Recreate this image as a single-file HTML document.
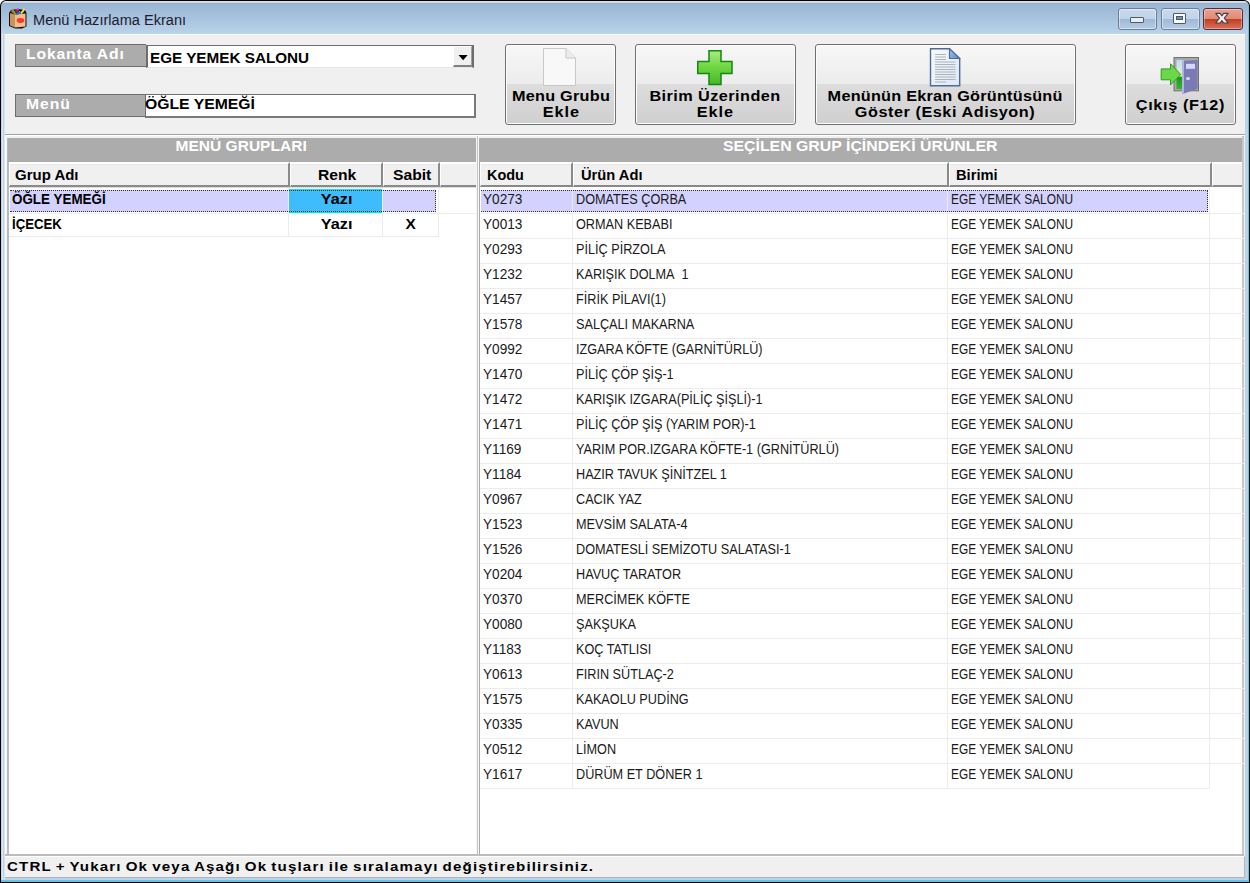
<!DOCTYPE html>
<html><head><meta charset="utf-8">
<style>
*{margin:0;padding:0;box-sizing:border-box}
html,body{width:1250px;height:883px;overflow:hidden;background:#fff}
body{position:relative;font-family:"Liberation Sans",sans-serif}
.a{position:absolute}
.t{position:absolute;white-space:nowrap;line-height:1;transform-origin:0 0}
</style></head><body>
<div class="a" style="left:0;top:0;width:1250px;height:883px;background:#000;border-radius:6px 6px 0 0"></div>
<div class="a" style="left:1px;top:1px;width:1248px;height:881px;border-radius:5px 5px 0 0;background:linear-gradient(#dde3ea 0,#dde3ea 1px,#c8d4e0 1px,#c8d4e0 2px,#98b4d1 2px,#b9d3ea 33px,#b9d3ea 100%)"></div>
<div class="a" style="left:1px;top:33px;width:1px;height:849px;background:#c9d3dd;"></div>
<div class="a" style="left:2px;top:33px;width:1px;height:849px;background:#dbe7f3;"></div>
<div class="a" style="left:4px;top:33px;width:1px;height:849px;background:#d6e2ee;"></div>
<div class="a" style="left:1248px;top:6px;width:1px;height:876px;background:#5bc8e6;"></div>
<div class="a" style="left:1px;top:880px;width:1248px;height:2px;background:#5bc8e6;"></div>
<div class="a" style="left:5px;top:34px;width:1240px;height:844px;background:#f0f0f0;"></div>
<div class="a" style="left:5px;top:34px;width:1240px;height:1px;background:#fbfbfb;"></div>
<div class="t" style="left:33px;top:12px;font-size:15.5px;transform:scaleX(0.94);color:#1e1a2e;">Menü Hazırlama Ekranı</div>
<div class="a" style="left:1118px;top:8px;width:39px;height:22px;border:1px solid #6c7e94;border-radius:3px;background:linear-gradient(#c9daed 0,#bfd2e8 50%,#9fb8d4 50%,#b4cbe4 100%);box-shadow:inset 0 0 0 1px rgba(255,255,255,.45)"></div>
<div class="a" style="left:1130px;top:17px;width:14px;height:6px;background:#ececec;border:1px solid #4a5a6e;border-radius:1px"></div>
<div class="a" style="left:1161px;top:8px;width:39px;height:22px;border:1px solid #6c7e94;border-radius:3px;background:linear-gradient(#c9daed 0,#bfd2e8 50%,#9fb8d4 50%,#b4cbe4 100%);box-shadow:inset 0 0 0 1px rgba(255,255,255,.45)"></div>
<div class="a" style="left:1173px;top:13px;width:13px;height:11px;background:#fafafa;border:1px solid #4a5a6e;border-radius:1px"></div>
<div class="a" style="left:1176px;top:16px;width:7px;height:4px;background:#7b8fa8;border:1px solid #4a5a6e"></div>
<div class="a" style="left:1203px;top:8px;width:40px;height:22px;border:1px solid #5a2a38;border-radius:3px;background:linear-gradient(#e8a493 0,#dd8a75 50%,#c23b1e 50%,#d6735c 100%);box-shadow:inset 0 0 0 1px rgba(255,255,255,.35)"></div>
<svg class="a" style="left:1212px;top:10px" width="20" height="16" viewBox="0 0 20 16"><path d="M3.7 3.4H8.1L9.9 5.8L11.7 3.4H16.1L12.3 8.2L16.1 13H11.7L9.9 10.6L8.1 13H3.7L7.5 8.2Z" fill="#f0f0f0" stroke="#4e3c44" stroke-width="1.1" stroke-linejoin="round"/></svg>
<div class="a" style="left:15px;top:44px;width:131px;height:23px;background:#acacac;border:1px solid #6e6e6e;border-right:none"></div>
<div class="t" style="left:26px;top:47px;font-size:14px;font-weight:bold;transform:scaleX(1.12);letter-spacing:0.77px;color:#fff;">Lokanta Adı</div>
<div class="a" style="left:146px;top:45px;width:328px;height:23px;background:#fff;border-top:1px solid #6d6d6d;border-left:2px solid #6d6d6d;border-right:2px solid #6d6d6d;border-bottom:1px solid #e6e6e6"></div>
<div class="a" style="left:453px;top:46px;width:19px;height:21px;background:#f0f0f0;border-top:1px solid #fff;border-left:1px solid #fff;border-bottom:2px solid #808080;border-right:1px solid #a0a0a0"></div>
<svg class="a" style="left:458px;top:55px" width="10" height="6" viewBox="0 0 10 6"><path d="M0.5 0H9.7L5.1 5.2Z" fill="#000"/></svg>
<div class="t" style="left:150px;top:51px;font-size:14px;font-weight:bold;transform:scaleX(1.09);color:#000;">EGE YEMEK SALONU</div>
<div class="a" style="left:15px;top:94px;width:130px;height:23px;background:#acacac;border:1px solid #6e6e6e;border-right:none"></div>
<div class="t" style="left:26px;top:97px;font-size:14px;font-weight:bold;transform:scaleX(1.12);letter-spacing:0.83px;color:#fff;">Menü</div>
<div class="a" style="left:145px;top:94px;width:331px;height:24px;background:#fff;border-top:1px solid #6e6e6e;border-left:1px solid #6e6e6e;border-right:2px solid #7a7a7a;border-bottom:2px solid #7a7a7a"></div>
<div class="t" style="left:145px;top:97px;font-size:14px;font-weight:bold;transform:scaleX(1.125);color:#000;">ÖĞLE YEMEĞİ</div>
<div class="a" style="left:505px;top:44px;width:111px;height:81px;border:1px solid #707070;border-radius:3px;background:linear-gradient(#f7f7f7 0,#ececec 39px,#dddddd 39px,#cfcfcf 100%);box-shadow:inset 0 0 0 1px #fcfcfc"></div>
<div class="a" style="left:635px;top:44px;width:161px;height:81px;border:1px solid #707070;border-radius:3px;background:linear-gradient(#f7f7f7 0,#ececec 39px,#dddddd 39px,#cfcfcf 100%);box-shadow:inset 0 0 0 1px #fcfcfc"></div>
<div class="a" style="left:815px;top:44px;width:261px;height:81px;border:1px solid #707070;border-radius:3px;background:linear-gradient(#f7f7f7 0,#ececec 39px,#dddddd 39px,#cfcfcf 100%);box-shadow:inset 0 0 0 1px #fcfcfc"></div>
<div class="a" style="left:1125px;top:44px;width:111px;height:81px;border:1px solid #707070;border-radius:3px;background:linear-gradient(#f7f7f7 0,#ececec 39px,#dddddd 39px,#cfcfcf 100%);box-shadow:inset 0 0 0 1px #fcfcfc"></div>
<div class="t" style="left:261px;width:600px;text-align:center;top:89px;font-size:14.5px;font-weight:bold;color:#000"><span style="display:inline-block;transform:scaleX(1.12);letter-spacing:0.22px;padding-left:0.22px;">Menu Grubu</span></div>
<div class="t" style="left:261px;width:600px;text-align:center;top:105px;font-size:14.5px;font-weight:bold;color:#000"><span style="display:inline-block;transform:scaleX(1.12);letter-spacing:0.8px;padding-left:0.8px;">Ekle</span></div>
<div class="t" style="left:415px;width:600px;text-align:center;top:89px;font-size:14.5px;font-weight:bold;color:#000"><span style="display:inline-block;transform:scaleX(1.12);letter-spacing:0.4px;padding-left:0.4px;">Birim Üzerinden</span></div>
<div class="t" style="left:415px;width:600px;text-align:center;top:105px;font-size:14.5px;font-weight:bold;color:#000"><span style="display:inline-block;transform:scaleX(1.12);letter-spacing:0.8px;padding-left:0.8px;">Ekle</span></div>
<div class="t" style="left:645px;width:600px;text-align:center;top:89px;font-size:14.5px;font-weight:bold;color:#000"><span style="display:inline-block;transform:scaleX(1.12);letter-spacing:0.21px;padding-left:0.21px;">Menünün Ekran Görüntüsünü</span></div>
<div class="t" style="left:645px;width:600px;text-align:center;top:105px;font-size:14.5px;font-weight:bold;color:#000"><span style="display:inline-block;transform:scaleX(1.12);letter-spacing:0.48px;padding-left:0.48px;">Göster (Eski Adisyon)</span></div>
<div class="t" style="left:880px;width:600px;text-align:center;top:98px;font-size:14.5px;font-weight:bold;color:#000"><span style="display:inline-block;transform:scaleX(1.12);letter-spacing:0.57px;padding-left:0.57px;">Çıkış (F12)</span></div>
<svg class="a" style="left:542px;top:47px" width="36" height="40" viewBox="0 0 36 40"><path d="M1.5 1.5H24L33.5 11V38.5H1.5Z" fill="#f8f8f8" stroke="#c8c8c8"/><path d="M24 1.5V11H33.5" fill="#ececec" stroke="#c8c8c8"/></svg>
<svg class="a" style="left:697px;top:50px" width="36" height="36" viewBox="0 0 36 36"><defs><linearGradient id="pl" x1="0" y1="0" x2="0" y2="1"><stop offset="0" stop-color="#a8ec80"/><stop offset=".5" stop-color="#6cd640"/><stop offset="1" stop-color="#48b82a"/></linearGradient></defs><path d="M12 0.75H24V11.5H35V23.5H24V34.5H12V23.5H0.75V11.5H12Z" fill="url(#pl)" stroke="#15870f" stroke-width="1.5"/></svg>
<svg class="a" style="left:929px;top:47px" width="32" height="40" viewBox="0 0 32 40"><defs><linearGradient id="dg" x1="0" y1="0" x2="1" y2="1"><stop offset="0" stop-color="#f6fafe"/><stop offset="1" stop-color="#dce8f6"/></linearGradient><linearGradient id="fg" x1="0" y1="0" x2="1" y2="1"><stop offset="0" stop-color="#a8d0f4"/><stop offset="1" stop-color="#4a88c8"/></linearGradient></defs><path d="M1.5 1.8H20.5L30.7 11.5V38.7H1.5Z" fill="url(#dg)" stroke="#51699a" stroke-width="1.4"/><path d="M20.5 1.8V11.5H30.7Z" fill="url(#fg)" stroke="#51699a" stroke-width="1.2"/><g stroke="#a8aab0" stroke-width="0.9"><path d="M6 7.5H17M6 10H17M6 12.5H17M6 15H26.5M6 17.5H26.5M6 20H26.5M6 22.5H26.5M6 25H26.5M6 27.5H26.5M6 30H26.5M6 32.5H26.5M6 35H17"/></g></svg>
<svg class="a" style="left:1155px;top:55px" width="46" height="42" viewBox="0 0 46 42"><defs><linearGradient id="op" x1="0" y1="0" x2="0" y2="1"><stop offset="0" stop-color="#b8dcf8"/><stop offset=".55" stop-color="#eef2c8"/><stop offset=".6" stop-color="#1a9a1a"/><stop offset="1" stop-color="#2eb82e"/></linearGradient></defs><rect x="19" y="2.5" width="24.5" height="33.3" fill="#a8a8a8" stroke="#707070"/><rect x="21.5" y="5" width="7" height="29" fill="url(#op)"/><path d="M27 6 L42.5 5 V33.7 L27 39.3Z" fill="#7a7ab6"/><path d="M27 6 L29 5.9 V38.5 L27 39.3Z" fill="#b4b4e4"/><rect x="31" y="8.8" width="9" height="5" fill="#d8d8fc"/><ellipse cx="33" cy="23.5" rx="2" ry="1.6" fill="#e0e0e0"/><path d="M6.2 13.9H15.5V8.8L25.8 19.5L15.5 29.9V24.8H6.2Z" fill="#6ad848" stroke="#2a9a20"/></svg>
<div class="a" style="left:5px;top:134px;width:1240px;height:1px;background:#a0a0a0;"></div>
<div class="a" style="left:5px;top:135px;width:1240px;height:1px;background:#ffffff;"></div>
<div class="a" style="left:5px;top:136px;width:472px;height:720px;background:#f0f0f0;"></div>
<div class="a" style="left:5px;top:136px;width:1px;height:720px;background:#ffffff;"></div>
<div class="a" style="left:7px;top:138px;width:2px;height:716px;background:#bcbcbc;"></div>
<div class="a" style="left:8px;top:138px;width:469px;height:24px;background:#acacac;"></div>
<div class="t" style="left:-59px;width:600px;text-align:center;top:139px;font-size:14px;font-weight:bold;color:#fff"><span style="display:inline-block;transform:scaleX(1.11);">MENÜ GRUPLARI</span></div>
<div class="a" style="left:9px;top:162px;width:467px;height:692px;background:#ffffff;"></div>
<div class="a" style="left:9px;top:162px;width:281px;height:25px;background:#f0f0f0;border-top:2px solid #fff;border-left:1px solid #fff;border-right:2px solid #8a8a8a;border-bottom:2px solid #8a8a8a;box-shadow:inset 0 1px 0 #e8e8e8"></div>
<div class="a" style="left:290px;top:162px;width:93px;height:25px;background:#f0f0f0;border-top:2px solid #fff;border-left:1px solid #fff;border-right:2px solid #8a8a8a;border-bottom:2px solid #8a8a8a;box-shadow:inset 0 1px 0 #e8e8e8"></div>
<div class="a" style="left:383px;top:162px;width:57px;height:25px;background:#f0f0f0;border-top:2px solid #fff;border-left:1px solid #fff;border-right:2px solid #8a8a8a;border-bottom:2px solid #8a8a8a;box-shadow:inset 0 1px 0 #e8e8e8"></div>
<div class="a" style="left:440px;top:162px;width:36px;height:25px;background:#f0f0f0;border-top:2px solid #fff;border-left:1px solid #fff;border-bottom:2px solid #8a8a8a"></div>
<div class="t" style="left:15px;top:168px;font-size:14px;font-weight:bold;transform:scaleX(1.07);color:#000;">Grup Adı</div>
<div class="t" style="left:318px;top:168px;font-size:14px;font-weight:bold;transform:scaleX(1.12);color:#000;">Renk</div>
<div class="t" style="left:393px;top:168px;font-size:14px;font-weight:bold;transform:scaleX(1.12);color:#000;">Sabit</div>
<div class="a" style="left:9px;top:187px;width:467px;height:1px;background:#dcdcdc;"></div>
<div class="a" style="left:480px;top:187px;width:762px;height:1px;background:#dcdcdc;"></div>
<div class="a" style="left:10px;top:190px;width:426px;height:22px;background:#d3d2fe;"></div>
<div class="a" style="left:9px;top:213px;width:467px;height:1px;background:#ececec;"></div>
<div class="a" style="left:9px;top:236px;width:430px;height:1px;background:#ececec;"></div>
<div class="a" style="left:288px;top:188px;width:1px;height:49px;background:#ececec;"></div>
<div class="a" style="left:382px;top:188px;width:1px;height:49px;background:#ececec;"></div>
<div class="a" style="left:438px;top:188px;width:1px;height:49px;background:#ececec;"></div>
<div class="a" style="left:289px;top:189px;width:93px;height:24px;background:#3ebcfc;border-top:1px solid #00e8f0;border-bottom:1px solid #00e8f0"></div>
<div class="a" style="left:10px;top:190px;width:426px;height:22px;background:transparent;border:1px dotted #333;border-left:none"></div>
<div class="t" style="left:12px;top:192px;font-size:14px;font-weight:bold;transform:scaleX(0.958);color:#000;">ÖĞLE YEMEĞİ</div>
<div class="t" style="left:12px;top:217px;font-size:14px;font-weight:bold;transform:scaleX(0.941);color:#000;">İÇECEK</div>
<div class="t" style="left:37px;width:600px;text-align:center;top:192px;font-size:14px;font-weight:bold;color:#000"><span style="display:inline-block;transform:scaleX(1.16);">Yazı</span></div>
<div class="t" style="left:37px;width:600px;text-align:center;top:217px;font-size:14px;font-weight:bold;color:#000"><span style="display:inline-block;transform:scaleX(1.16);">Yazı</span></div>
<div class="t" style="left:111px;width:600px;text-align:center;top:217px;font-size:14px;font-weight:bold;color:#000"><span style="display:inline-block;transform:scaleX(1.1);">X</span></div>
<div class="a" style="left:476px;top:136px;width:1px;height:720px;background:#f6f6f6;"></div>
<div class="a" style="left:477px;top:136px;width:1px;height:720px;background:#c4c4c4;"></div>
<div class="a" style="left:478px;top:136px;width:1px;height:720px;background:#fafafa;"></div>
<div class="a" style="left:479px;top:162px;width:1px;height:692px;background:#a8a8a8;"></div>
<div class="a" style="left:479px;top:138px;width:763px;height:24px;background:#acacac;"></div>
<div class="t" style="left:560px;width:600px;text-align:center;top:139px;font-size:14px;font-weight:bold;color:#fff"><span style="display:inline-block;transform:scaleX(1.133);">SEÇİLEN GRUP İÇİNDEKİ ÜRÜNLER</span></div>
<div class="a" style="left:480px;top:162px;width:762px;height:692px;background:#ffffff;"></div>
<div class="a" style="left:1242px;top:136px;width:2px;height:720px;background:#c8c8c8;"></div>
<div class="a" style="left:480px;top:162px;width:93px;height:25px;background:#f0f0f0;border-top:2px solid #fff;border-left:1px solid #fff;border-right:2px solid #8a8a8a;border-bottom:2px solid #8a8a8a;box-shadow:inset 0 1px 0 #e8e8e8"></div>
<div class="a" style="left:573px;top:162px;width:376px;height:25px;background:#f0f0f0;border-top:2px solid #fff;border-left:1px solid #fff;border-right:2px solid #8a8a8a;border-bottom:2px solid #8a8a8a;box-shadow:inset 0 1px 0 #e8e8e8"></div>
<div class="a" style="left:949px;top:162px;width:263px;height:25px;background:#f0f0f0;border-top:2px solid #fff;border-left:1px solid #fff;border-right:2px solid #8a8a8a;border-bottom:2px solid #8a8a8a;box-shadow:inset 0 1px 0 #e8e8e8"></div>
<div class="a" style="left:1212px;top:162px;width:30px;height:25px;background:#f0f0f0;border-top:2px solid #fff;border-left:1px solid #fff;border-bottom:2px solid #8a8a8a"></div>
<div class="t" style="left:487px;top:168px;font-size:14px;font-weight:bold;transform:scaleX(1.03);color:#000;">Kodu</div>
<div class="t" style="left:581px;top:168px;font-size:14px;font-weight:bold;transform:scaleX(1.05);color:#000;">Ürün Adı</div>
<div class="t" style="left:956px;top:168px;font-size:14px;font-weight:bold;transform:scaleX(1.05);color:#000;">Birimi</div>
<div class="a" style="left:481px;top:190px;width:727px;height:22px;background:#d3d2fe;border:1px dotted #333;border-left:none"></div>
<div class="t" style="left:483px;top:192px;font-size:14px;transform:scaleX(0.974);color:#1a1a1a;">Y0273</div>
<div class="t" style="left:576px;top:192px;font-size:14px;transform:scaleX(0.905);color:#1a1a1a;">DOMATES ÇORBA</div>
<div class="t" style="left:951px;top:192px;font-size:14px;transform:scaleX(0.85);color:#1a1a1a;">EGE YEMEK SALONU</div>
<div class="a" style="left:480px;top:213px;width:764px;height:1px;background:#ececec;"></div>
<div class="t" style="left:483px;top:217px;font-size:14px;transform:scaleX(0.974);color:#1a1a1a;">Y0013</div>
<div class="t" style="left:576px;top:217px;font-size:14px;transform:scaleX(0.905);color:#1a1a1a;">ORMAN KEBABI</div>
<div class="t" style="left:951px;top:217px;font-size:14px;transform:scaleX(0.85);color:#1a1a1a;">EGE YEMEK SALONU</div>
<div class="a" style="left:480px;top:238px;width:764px;height:1px;background:#ececec;"></div>
<div class="t" style="left:483px;top:242px;font-size:14px;transform:scaleX(0.974);color:#1a1a1a;">Y0293</div>
<div class="t" style="left:576px;top:242px;font-size:14px;transform:scaleX(0.905);color:#1a1a1a;">PİLİÇ PİRZOLA</div>
<div class="t" style="left:951px;top:242px;font-size:14px;transform:scaleX(0.85);color:#1a1a1a;">EGE YEMEK SALONU</div>
<div class="a" style="left:480px;top:263px;width:764px;height:1px;background:#ececec;"></div>
<div class="t" style="left:483px;top:267px;font-size:14px;transform:scaleX(0.974);color:#1a1a1a;">Y1232</div>
<div class="t" style="left:576px;top:267px;font-size:14px;transform:scaleX(0.905);color:#1a1a1a;">KARIŞIK DOLMA&nbsp; 1</div>
<div class="t" style="left:951px;top:267px;font-size:14px;transform:scaleX(0.85);color:#1a1a1a;">EGE YEMEK SALONU</div>
<div class="a" style="left:480px;top:288px;width:764px;height:1px;background:#ececec;"></div>
<div class="t" style="left:483px;top:292px;font-size:14px;transform:scaleX(0.974);color:#1a1a1a;">Y1457</div>
<div class="t" style="left:576px;top:292px;font-size:14px;transform:scaleX(0.905);color:#1a1a1a;">FİRİK PİLAVI(1)</div>
<div class="t" style="left:951px;top:292px;font-size:14px;transform:scaleX(0.85);color:#1a1a1a;">EGE YEMEK SALONU</div>
<div class="a" style="left:480px;top:313px;width:764px;height:1px;background:#ececec;"></div>
<div class="t" style="left:483px;top:317px;font-size:14px;transform:scaleX(0.974);color:#1a1a1a;">Y1578</div>
<div class="t" style="left:576px;top:317px;font-size:14px;transform:scaleX(0.905);color:#1a1a1a;">SALÇALI MAKARNA</div>
<div class="t" style="left:951px;top:317px;font-size:14px;transform:scaleX(0.85);color:#1a1a1a;">EGE YEMEK SALONU</div>
<div class="a" style="left:480px;top:338px;width:764px;height:1px;background:#ececec;"></div>
<div class="t" style="left:483px;top:342px;font-size:14px;transform:scaleX(0.974);color:#1a1a1a;">Y0992</div>
<div class="t" style="left:576px;top:342px;font-size:14px;transform:scaleX(0.905);color:#1a1a1a;">IZGARA KÖFTE (GARNİTÜRLÜ)</div>
<div class="t" style="left:951px;top:342px;font-size:14px;transform:scaleX(0.85);color:#1a1a1a;">EGE YEMEK SALONU</div>
<div class="a" style="left:480px;top:363px;width:764px;height:1px;background:#ececec;"></div>
<div class="t" style="left:483px;top:367px;font-size:14px;transform:scaleX(0.974);color:#1a1a1a;">Y1470</div>
<div class="t" style="left:576px;top:367px;font-size:14px;transform:scaleX(0.905);color:#1a1a1a;">PİLİÇ ÇÖP ŞİŞ-1</div>
<div class="t" style="left:951px;top:367px;font-size:14px;transform:scaleX(0.85);color:#1a1a1a;">EGE YEMEK SALONU</div>
<div class="a" style="left:480px;top:388px;width:764px;height:1px;background:#ececec;"></div>
<div class="t" style="left:483px;top:392px;font-size:14px;transform:scaleX(0.974);color:#1a1a1a;">Y1472</div>
<div class="t" style="left:576px;top:392px;font-size:14px;transform:scaleX(0.905);color:#1a1a1a;">KARIŞIK IZGARA(PİLİÇ ŞİŞLİ)-1</div>
<div class="t" style="left:951px;top:392px;font-size:14px;transform:scaleX(0.85);color:#1a1a1a;">EGE YEMEK SALONU</div>
<div class="a" style="left:480px;top:413px;width:764px;height:1px;background:#ececec;"></div>
<div class="t" style="left:483px;top:417px;font-size:14px;transform:scaleX(0.974);color:#1a1a1a;">Y1471</div>
<div class="t" style="left:576px;top:417px;font-size:14px;transform:scaleX(0.905);color:#1a1a1a;">PİLİÇ ÇÖP ŞİŞ (YARIM POR)-1</div>
<div class="t" style="left:951px;top:417px;font-size:14px;transform:scaleX(0.85);color:#1a1a1a;">EGE YEMEK SALONU</div>
<div class="a" style="left:480px;top:438px;width:764px;height:1px;background:#ececec;"></div>
<div class="t" style="left:483px;top:442px;font-size:14px;transform:scaleX(0.974);color:#1a1a1a;">Y1169</div>
<div class="t" style="left:576px;top:442px;font-size:14px;transform:scaleX(0.905);color:#1a1a1a;">YARIM POR.IZGARA KÖFTE-1 (GRNİTÜRLÜ)</div>
<div class="t" style="left:951px;top:442px;font-size:14px;transform:scaleX(0.85);color:#1a1a1a;">EGE YEMEK SALONU</div>
<div class="a" style="left:480px;top:463px;width:764px;height:1px;background:#ececec;"></div>
<div class="t" style="left:483px;top:467px;font-size:14px;transform:scaleX(0.974);color:#1a1a1a;">Y1184</div>
<div class="t" style="left:576px;top:467px;font-size:14px;transform:scaleX(0.905);color:#1a1a1a;">HAZIR TAVUK ŞİNİTZEL 1</div>
<div class="t" style="left:951px;top:467px;font-size:14px;transform:scaleX(0.85);color:#1a1a1a;">EGE YEMEK SALONU</div>
<div class="a" style="left:480px;top:488px;width:764px;height:1px;background:#ececec;"></div>
<div class="t" style="left:483px;top:492px;font-size:14px;transform:scaleX(0.974);color:#1a1a1a;">Y0967</div>
<div class="t" style="left:576px;top:492px;font-size:14px;transform:scaleX(0.905);color:#1a1a1a;">CACIK YAZ</div>
<div class="t" style="left:951px;top:492px;font-size:14px;transform:scaleX(0.85);color:#1a1a1a;">EGE YEMEK SALONU</div>
<div class="a" style="left:480px;top:513px;width:764px;height:1px;background:#ececec;"></div>
<div class="t" style="left:483px;top:517px;font-size:14px;transform:scaleX(0.974);color:#1a1a1a;">Y1523</div>
<div class="t" style="left:576px;top:517px;font-size:14px;transform:scaleX(0.905);color:#1a1a1a;">MEVSİM SALATA-4</div>
<div class="t" style="left:951px;top:517px;font-size:14px;transform:scaleX(0.85);color:#1a1a1a;">EGE YEMEK SALONU</div>
<div class="a" style="left:480px;top:538px;width:764px;height:1px;background:#ececec;"></div>
<div class="t" style="left:483px;top:542px;font-size:14px;transform:scaleX(0.974);color:#1a1a1a;">Y1526</div>
<div class="t" style="left:576px;top:542px;font-size:14px;transform:scaleX(0.905);color:#1a1a1a;">DOMATESLİ SEMİZOTU SALATASI-1</div>
<div class="t" style="left:951px;top:542px;font-size:14px;transform:scaleX(0.85);color:#1a1a1a;">EGE YEMEK SALONU</div>
<div class="a" style="left:480px;top:563px;width:764px;height:1px;background:#ececec;"></div>
<div class="t" style="left:483px;top:567px;font-size:14px;transform:scaleX(0.974);color:#1a1a1a;">Y0204</div>
<div class="t" style="left:576px;top:567px;font-size:14px;transform:scaleX(0.905);color:#1a1a1a;">HAVUÇ TARATOR</div>
<div class="t" style="left:951px;top:567px;font-size:14px;transform:scaleX(0.85);color:#1a1a1a;">EGE YEMEK SALONU</div>
<div class="a" style="left:480px;top:588px;width:764px;height:1px;background:#ececec;"></div>
<div class="t" style="left:483px;top:592px;font-size:14px;transform:scaleX(0.974);color:#1a1a1a;">Y0370</div>
<div class="t" style="left:576px;top:592px;font-size:14px;transform:scaleX(0.905);color:#1a1a1a;">MERCİMEK KÖFTE</div>
<div class="t" style="left:951px;top:592px;font-size:14px;transform:scaleX(0.85);color:#1a1a1a;">EGE YEMEK SALONU</div>
<div class="a" style="left:480px;top:613px;width:764px;height:1px;background:#ececec;"></div>
<div class="t" style="left:483px;top:617px;font-size:14px;transform:scaleX(0.974);color:#1a1a1a;">Y0080</div>
<div class="t" style="left:576px;top:617px;font-size:14px;transform:scaleX(0.905);color:#1a1a1a;">ŞAKŞUKA</div>
<div class="t" style="left:951px;top:617px;font-size:14px;transform:scaleX(0.85);color:#1a1a1a;">EGE YEMEK SALONU</div>
<div class="a" style="left:480px;top:638px;width:764px;height:1px;background:#ececec;"></div>
<div class="t" style="left:483px;top:642px;font-size:14px;transform:scaleX(0.974);color:#1a1a1a;">Y1183</div>
<div class="t" style="left:576px;top:642px;font-size:14px;transform:scaleX(0.905);color:#1a1a1a;">KOÇ TATLISI</div>
<div class="t" style="left:951px;top:642px;font-size:14px;transform:scaleX(0.85);color:#1a1a1a;">EGE YEMEK SALONU</div>
<div class="a" style="left:480px;top:663px;width:764px;height:1px;background:#ececec;"></div>
<div class="t" style="left:483px;top:667px;font-size:14px;transform:scaleX(0.974);color:#1a1a1a;">Y0613</div>
<div class="t" style="left:576px;top:667px;font-size:14px;transform:scaleX(0.905);color:#1a1a1a;">FIRIN SÜTLAÇ-2</div>
<div class="t" style="left:951px;top:667px;font-size:14px;transform:scaleX(0.85);color:#1a1a1a;">EGE YEMEK SALONU</div>
<div class="a" style="left:480px;top:688px;width:764px;height:1px;background:#ececec;"></div>
<div class="t" style="left:483px;top:692px;font-size:14px;transform:scaleX(0.974);color:#1a1a1a;">Y1575</div>
<div class="t" style="left:576px;top:692px;font-size:14px;transform:scaleX(0.905);color:#1a1a1a;">KAKAOLU PUDİNG</div>
<div class="t" style="left:951px;top:692px;font-size:14px;transform:scaleX(0.85);color:#1a1a1a;">EGE YEMEK SALONU</div>
<div class="a" style="left:480px;top:713px;width:764px;height:1px;background:#ececec;"></div>
<div class="t" style="left:483px;top:717px;font-size:14px;transform:scaleX(0.974);color:#1a1a1a;">Y0335</div>
<div class="t" style="left:576px;top:717px;font-size:14px;transform:scaleX(0.905);color:#1a1a1a;">KAVUN</div>
<div class="t" style="left:951px;top:717px;font-size:14px;transform:scaleX(0.85);color:#1a1a1a;">EGE YEMEK SALONU</div>
<div class="a" style="left:480px;top:738px;width:764px;height:1px;background:#ececec;"></div>
<div class="t" style="left:483px;top:742px;font-size:14px;transform:scaleX(0.974);color:#1a1a1a;">Y0512</div>
<div class="t" style="left:576px;top:742px;font-size:14px;transform:scaleX(0.905);color:#1a1a1a;">LİMON</div>
<div class="t" style="left:951px;top:742px;font-size:14px;transform:scaleX(0.85);color:#1a1a1a;">EGE YEMEK SALONU</div>
<div class="a" style="left:480px;top:763px;width:764px;height:1px;background:#ececec;"></div>
<div class="t" style="left:483px;top:767px;font-size:14px;transform:scaleX(0.974);color:#1a1a1a;">Y1617</div>
<div class="t" style="left:576px;top:767px;font-size:14px;transform:scaleX(0.905);color:#1a1a1a;">DÜRÜM ET DÖNER 1</div>
<div class="t" style="left:951px;top:767px;font-size:14px;transform:scaleX(0.85);color:#1a1a1a;">EGE YEMEK SALONU</div>
<div class="a" style="left:480px;top:788px;width:730px;height:1px;background:#ececec;"></div>
<div class="a" style="left:572px;top:188px;width:1px;height:600px;background:#ececec;"></div>
<div class="a" style="left:947px;top:188px;width:1px;height:600px;background:#ececec;"></div>
<div class="a" style="left:1209px;top:188px;width:1px;height:600px;background:#ececec;"></div>
<div class="a" style="left:481px;top:190px;width:727px;height:22px;background:transparent;border:1px dotted #333;border-left:none"></div>
<div class="a" style="left:5px;top:854px;width:1239px;height:2px;background:#bcbcbc;"></div>
<div class="a" style="left:5px;top:856px;width:1240px;height:21px;background:#f0f0f0;border-top:1px solid #fff;border-right:1px solid #b4b4b4"></div>
<div class="a" style="left:5px;top:877px;width:1240px;height:1px;background:#b4b4b4;"></div>
<div class="t" style="left:7px;top:860px;font-size:13.5px;font-weight:bold;transform:scaleX(1.12);letter-spacing:1.03px;word-spacing:-1.2px;color:#000;">CTRL + Yukarı Ok veya Aşağı Ok tuşları ile sıralamayı değiştirebilirsiniz.</div>
<svg class="a" style="left:6px;top:6px" width="24" height="24" viewBox="0 0 24 24">
<path d="M3 7 L5 4 L12 3 L19 4 L20.5 7 V20.5 L16 22.5 L9 22.5 L3 20 Z" fill="#111"/>
<path d="M4 7 L9 8.5 V21.5 L4 19.5 Z" fill="#c8935c"/>
<path d="M9 8.5 L19.5 7.5 V20.5 L9 21.5 Z" fill="#f0c08a"/>
<ellipse cx="14.5" cy="14.5" rx="3.8" ry="2.4" fill="#ff3535"/>
<path d="M5 4.5 L9.5 8.5" stroke="#e0501a" stroke-width="1.6"/>
<path d="M6.5 4 L10 8.5" stroke="#50c040" stroke-width="1.8"/>
<circle cx="10.5" cy="5" r="1.6" fill="#ee0000"/>
<circle cx="11.8" cy="3.4" r="1.2" fill="#c040ff"/>
<path d="M10 8 L14.5 6.5" stroke="#1e6ee8" stroke-width="2.2"/>
<path d="M13.5 5 L13.5 6" stroke="#aaa" stroke-width="1.5"/>
<path d="M15 7.5 L18.5 3" stroke="#f0f040" stroke-width="2"/>
</svg>
</body></html>
